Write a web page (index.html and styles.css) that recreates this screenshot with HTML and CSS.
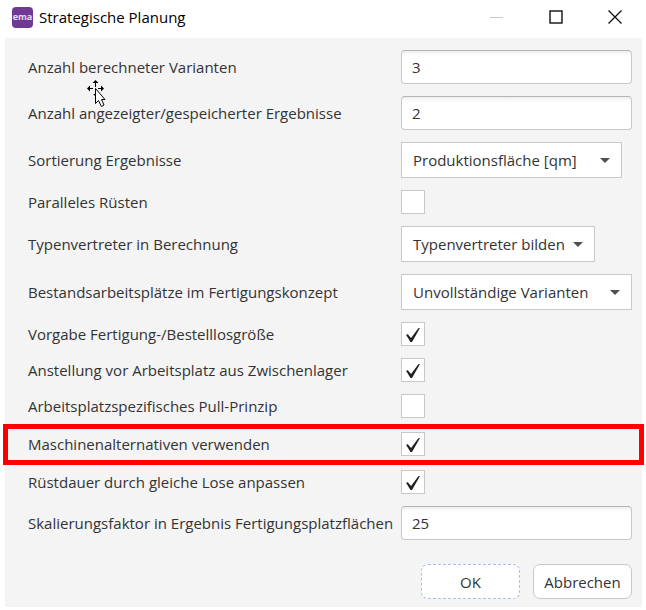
FILE: index.html
```html
<!DOCTYPE html>
<html lang="de">
<head>
<meta charset="utf-8">
<title>Strategische Planung</title>
<link rel="stylesheet" href="styles.css">
</head>
<body>
<header class="titlebar">
  <span class="logo">ema</span>
  <h1 class="title">Strategische Planung</h1>
  <div class="window-controls">
    <button type="button" class="window-button" aria-label="Minimieren" disabled>
      <svg width="14" height="14" viewBox="0 0 14 14"><path d="M0 7.5h13" stroke="#c8c8c8" fill="none"/></svg>
    </button>
    <button type="button" class="window-button" aria-label="Maximieren">
      <svg width="14" height="14" viewBox="0 0 14 14"><rect x="1" y="1" width="12" height="12" stroke="#111" stroke-width="1.4" fill="none"/></svg>
    </button>
    <button type="button" class="window-button" aria-label="Schließen">
      <svg width="14" height="14" viewBox="0 0 14 14"><path d="M.5 .5l13 13M13.5 .5l-13 13" stroke="#111" stroke-width="1.3" fill="none"/></svg>
    </button>
  </div>
</header>
<form class="panel">
  <div class="fields">
    <div class="row">
      <label for="berechnet">Anzahl berechneter Varianten</label>
      <input class="text" id="berechnet" type="text" value="3">
    </div>
    <div class="row">
      <label for="angezeigt">Anzahl angezeigter/gespeicherter Ergebnisse</label>
      <input class="text" id="angezeigt" type="text" value="2">
    </div>
    <div class="row">
      <label for="sortierung">Sortierung Ergebnisse</label>
      <div class="combo combo-medium"><select id="sortierung"><option>Produktionsfläche [qm]</option></select></div>
    </div>
    <div class="row">
      <label for="parallel">Paralleles Rüsten</label>
      <input class="check" id="parallel" type="checkbox">
    </div>
    <div class="row">
      <label for="typen">Typenvertreter in Berechnung</label>
      <div class="combo combo-small"><select id="typen"><option>Typenvertreter bilden</option></select></div>
    </div>
    <div class="row">
      <label for="bestand">Bestandsarbeitsplätze im Fertigungskonzept</label>
      <div class="combo"><select id="bestand"><option>Unvollständige Varianten</option></select></div>
    </div>
    <div class="row">
      <label for="vorgabe">Vorgabe Fertigung-/Bestelllosgröße</label>
      <input class="check" id="vorgabe" type="checkbox" checked>
    </div>
    <div class="row">
      <label for="anstellung">Anstellung vor Arbeitsplatz aus Zwischenlager</label>
      <input class="check" id="anstellung" type="checkbox" checked>
    </div>
    <div class="row">
      <label for="pull">Arbeitsplatzspezifisches Pull-Prinzip</label>
      <input class="check" id="pull" type="checkbox">
    </div>
    <div class="row highlighted">
      <label for="alternativen">Maschinenalternativen verwenden</label>
      <input class="check" id="alternativen" type="checkbox" checked>
    </div>
    <div class="row">
      <label for="ruestdauer">Rüstdauer durch gleiche Lose anpassen</label>
      <input class="check" id="ruestdauer" type="checkbox" checked>
    </div>
    <div class="row">
      <label for="skalierung">Skalierungsfaktor in Ergebnis Fertigungsplatzflächen</label>
      <input class="text" id="skalierung" type="text" value="25">
    </div>
  </div>
  <div class="actions">
    <button type="button" class="button button-default">OK</button>
    <button type="button" class="button">Abbrechen</button>
  </div>
</form>
<svg class="pointer" width="20" height="28" viewBox="0 0 20 28" aria-hidden="true">
  <path d="M8.5 1v6M1 8.500h5M11 8.500h5" stroke="#000" fill="none"/>
  <path d="M8.500 0l3 3h-6zM0 8.500l3-3v6zM17 8.500l-3-3v6zM6 14h2v2z" fill="#000"/>
  <path d="M8.500 8.500v15l3-3 3 6 2.500-1.500-2.500-5.500h3.500z" fill="#fff" stroke="#000"/>
</svg>
</body>
</html>
```
FILE: styles.css
```css
* {
  box-sizing: border-box;
}

body {
  margin: 0;
  background: #fff;
  color: #333;
  font: 15px/20px "Open Sans", "Noto Sans", sans-serif;
}

input,
select,
button {
  font: inherit;
  color: inherit;
  margin: 0;
}

.titlebar {
  display: flex;
  align-items: center;
  height: 38px;
  padding: 0 24px 4px 12px;
}

.logo {
  display: flex;
  justify-content: center;
  width: 21px;
  height: 21px;
  border-radius: 4px;
  background: #703a94;
  color: #e8dcf0;
  font: bold 9px/19px "Open Sans", sans-serif;
}

.title {
  flex: 1;
  margin: 0 0 0 6px;
  color: #000;
  font-size: 15px;
  font-weight: 400;
}

.window-controls {
  display: flex;
  gap: 45px;
}

.window-button {
  display: flex;
  padding: 0;
  border: 0;
  background: none;
}

.panel {
  margin: 0 4px 3px 5px;
  padding: 12px 10px 8px 23px;
  background: #f4f4f4;
}

.fields {
  display: grid;
  gap: 12px;
}

.row {
  display: grid;
  grid-template-columns: 373px 1fr;
  align-items: center;
  position: relative;
}

.row label {
  white-space: nowrap;
}

.text {
  width: 100%;
  height: 34px;
  padding: 0 10px;
  border: 1px solid #c8c8c8;
  border-top-color: #b4b4b4;
  border-radius: 4px;
  background: linear-gradient(#efefef, #fff 5px);
}

.combo {
  position: relative;
}

.combo-medium {
  width: 221px;
}

.combo-small {
  width: 194px;
}

.combo select {
  display: block;
  width: 100%;
  height: 36px;
  padding: 0 11px;
  border: 1px solid #c8c8c8;
  border-radius: 0;
  background: #fff;
  appearance: none;
}

.combo::after {
  content: "";
  position: absolute;
  top: 16px;
  right: 12px;
  border: 5px solid transparent;
  border-top-color: #505050;
  border-bottom: 0;
  pointer-events: none;
}

.check {
  width: 24px;
  height: 24px;
  border: 1px solid #c8c8c8;
  background: #fff;
  appearance: none;
}

.check:checked::before {
  content: "";
  display: block;
  width: 14px;
  height: 14px;
  margin: 5px 4px;
  background: #222;
  clip-path: polygon(0 48%, 13% 44%, 36% 72%, 88% 2%, 100% 0, 43% 100%, 32% 100%);
}

.highlighted {
  min-height: 28px;
}

.highlighted::after {
  content: "";
  position: absolute;
  inset: -6px -12px -7px -25px;
  border: 5px solid #f00;
  pointer-events: none;
}

.actions {
  display: flex;
  justify-content: flex-end;
  gap: 13px;
  margin-top: 24px;
}

.button {
  width: 99px;
  height: 35px;
  padding: 0;
  border: 1px solid #c8c8c8;
  border-radius: 7px;
  background: #fff;
}

.button-default {
  border: 1px dashed #a9bdf5;
}

.pointer {
  position: absolute;
  left: 87px;
  top: 80px;
  pointer-events: none;
}
```
